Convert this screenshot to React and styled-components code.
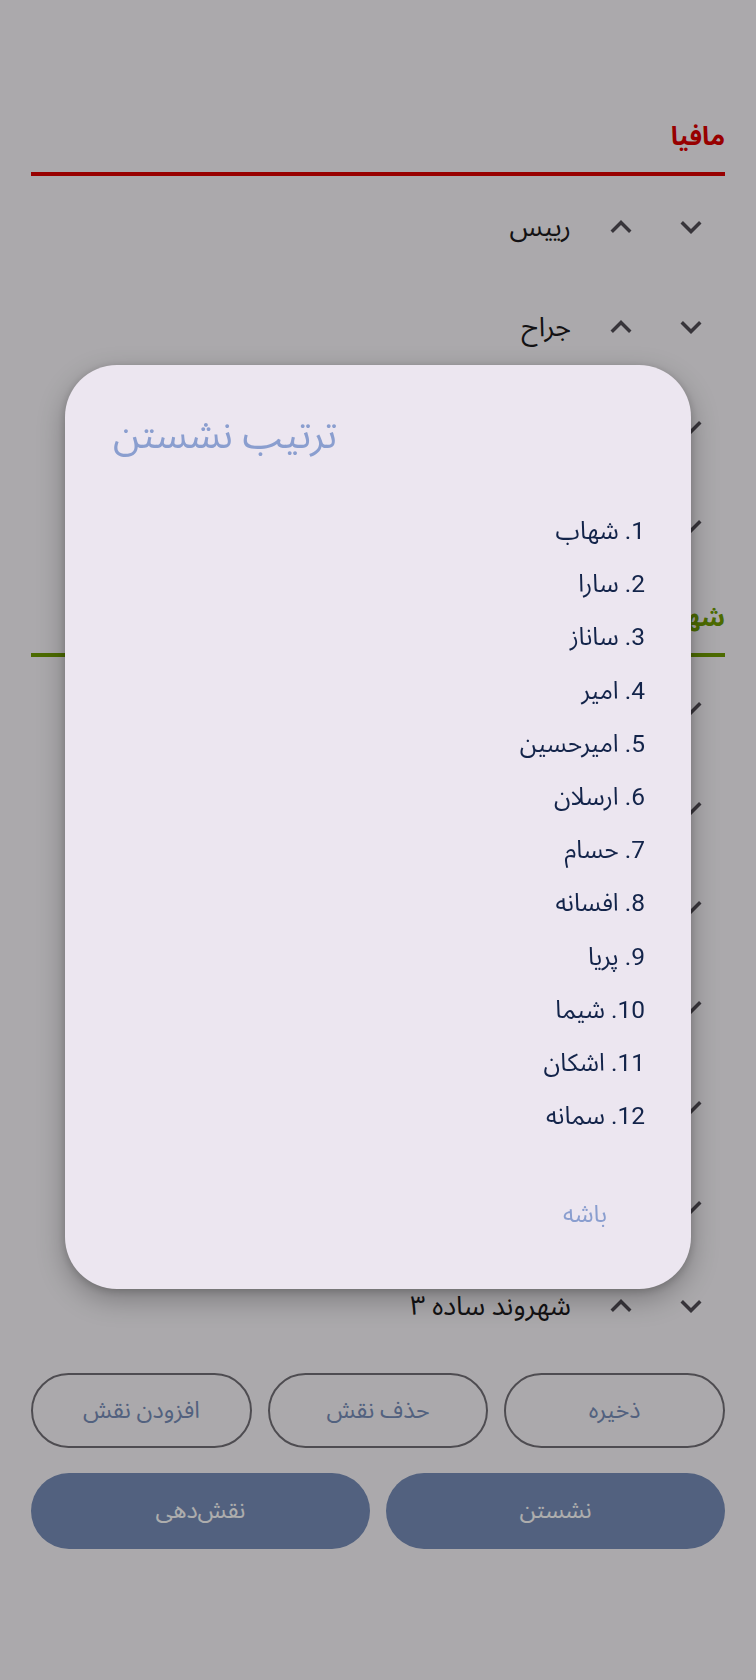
import React from "react";
import styled, { createGlobalStyle } from "styled-components";

const FONT = `"Roboto", "Noto Sans Arabic", "Vazirmatn", "DejaVu Sans", sans-serif`;

const Global = createGlobalStyle`
  html, body { margin: 0; padding: 0; background: #fdfafe; }
  body { font-family: ${FONT}; }
  * { box-sizing: border-box; }
`;

const Page = styled.div`
  direction: rtl;
  width: 756px;
  min-height: 1680px;
  padding: 94px 31px 0;
  display: flex;
  flex-direction: column;
`;

const SectionHeader = styled.div`
  display: flex;
  flex-direction: column;
  height: 82px;
`;

const SectionTitle = styled.div`
  height: 78px;
  padding-top: 25px;
  font-size: 25.5px;
  font-weight: 700;
  line-height: 34px;
  color: ${(p) => p.$color};
`;

const SectionLine = styled.div`
  height: 4px;
  background: ${(p) => p.$color};
`;

const Row = styled.div`
  height: 99.7px;
  display: flex;
  align-items: center;
  padding-right: 13px;
  padding-top: 3px;
  gap: 28px;
`;

const IconBtn = styled.div`
  width: 42px;
  height: 42px;
  display: flex;
  align-items: center;
  justify-content: center;
  color: #534f57;
`;

const RowText = styled.div`
  margin-right: 1px;
  font-size: 27px;
  color: #1d1b20;
`;

const ButtonRow = styled.div`
  display: grid;
  grid-template-columns: repeat(${(p) => p.$cols}, 1fr);
  gap: 16px;
  margin-top: ${(p) => p.$top}px;
`;

const OutlineButton = styled.div`
  height: 75px;
  border: 2px solid #747178;
  border-radius: 38px;
  display: flex;
  align-items: center;
  justify-content: center;
  font-size: 23.5px;
  color: #798fbb;
`;

const FilledButton = styled.div`
  height: 76px;
  border-radius: 38px;
  background: #798fbb;
  display: flex;
  align-items: center;
  justify-content: center;
  font-size: 23.5px;
  color: #ffffff;
`;

const Scrim = styled.div`
  position: fixed;
  inset: 0;
  background: rgba(0, 0, 0, 0.32);
`;

const Dialog = styled.div`
  position: absolute;
  top: 365px;
  left: 65px;
  width: 626px;
  height: 924px;
  border-radius: 52px;
  background: #ece6f0;
  box-shadow: 0 10px 28px rgba(0, 0, 0, 0.28), 0 2px 8px rgba(0, 0, 0, 0.18);
  display: flex;
  flex-direction: column;
  padding: 46px 46px 0 48px;
`;

const DialogTitle = styled.div`
  direction: rtl;
  align-self: flex-start;
  font-size: 39px;
  line-height: 48px;
  color: #8a9ecf;
`;

const List = styled.div`
  direction: rtl;
  margin-top: 45px;
  display: flex;
  flex-direction: column;
`;

const Item = styled.div`
  height: 53.2px;
  line-height: 53.2px;
  font-size: 24.5px;
  color: #13244a;
`;

const DialogActions = styled.div`
  display: flex;
  justify-content: flex-end;
  margin-top: 57px;
  padding-right: 38px;
`;

const TextButton = styled.div`
  font-size: 24px;
  line-height: 30px;
  color: #8a9ecf;
`;

const ChevronDown = () => (
  <svg width="42" height="42" viewBox="0 0 24 24" fill="currentColor">
    <path d="M16.59 8.59L12 13.17 7.41 8.59 6 10l6 6 6-6z" />
  </svg>
);

const ChevronUp = () => (
  <svg width="42" height="42" viewBox="0 0 24 24" fill="currentColor">
    <path d="M12 8l-6 6 1.41 1.41L12 10.83l4.59 4.58L18 14z" />
  </svg>
);

const mafia = ["رییس", "جراح", "دکتر لکتر", "ناتو"];
const citizens = [
  "دکتر",
  "کارآگاه",
  "تک‌تیرانداز",
  "زره‌پوش",
  "شهروند ساده ۱",
  "شهروند ساده ۲",
  "شهروند ساده ۳",
];
const seats = [
  "شهاب",
  "سارا",
  "ساناز",
  "امیر",
  "امیرحسین",
  "ارسلان",
  "حسام",
  "افسانه",
  "پریا",
  "شیما",
  "اشکان",
  "سمانه",
];

const Section = ({ title, color, roles }) => (
  <>
    <SectionHeader>
      <SectionTitle $color={color}>{title}</SectionTitle>
      <SectionLine $color={color} />
    </SectionHeader>
    {roles.map((r) => (
      <Row key={r}>
        <IconBtn>
          <ChevronDown />
        </IconBtn>
        <IconBtn>
          <ChevronUp />
        </IconBtn>
        <RowText>{r}</RowText>
      </Row>
    ))}
  </>
);

export default function App() {
  return (
    <>
      <Global />
      <Page>
        <Section title="مافیا" color="#e00000" roles={mafia} />
        <Section title="شهروند" color="#709e00" roles={citizens} />
        <ButtonRow $cols={3} $top={18}>
          <OutlineButton>ذخیره</OutlineButton>
          <OutlineButton>حذف نقش</OutlineButton>
          <OutlineButton>افزودن نقش</OutlineButton>
        </ButtonRow>
        <ButtonRow $cols={2} $top={25}>
          <FilledButton>نشستن</FilledButton>
          <FilledButton>نقش‌دهی</FilledButton>
        </ButtonRow>
      </Page>
      <Scrim />
      <Dialog>
        <DialogTitle>ترتیب نشستن</DialogTitle>
        <List>
          {seats.map((s, i) => (
            <Item key={s}>{`${i + 1}. ${s}`}</Item>
          ))}
        </List>
        <DialogActions>
          <TextButton>باشه</TextButton>
        </DialogActions>
      </Dialog>
    </>
  );
}
